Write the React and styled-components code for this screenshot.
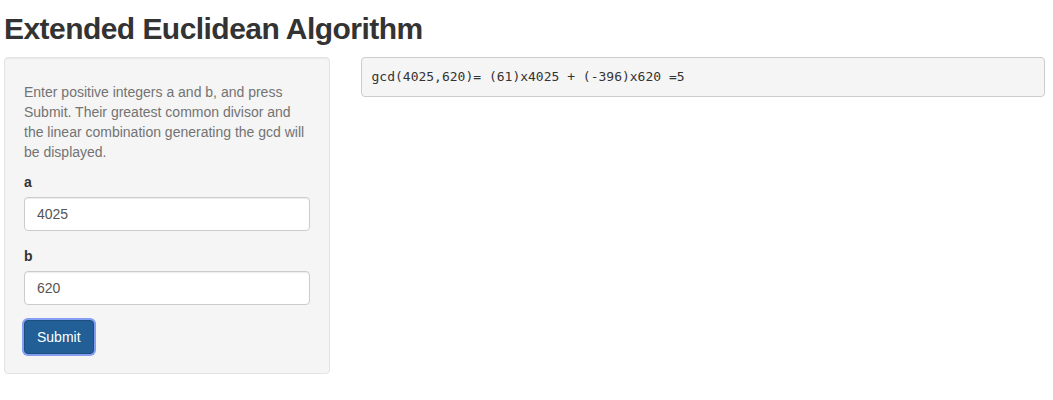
import React from "react";
import styled, { createGlobalStyle } from "styled-components";

const Global = createGlobalStyle`
  * { box-sizing: border-box; }
  html, body { margin: 0; padding: 0; background: #fff; }
  body {
    font-family: "Liberation Sans", Arial, Helvetica, sans-serif;
    font-size: 14px;
    line-height: 1.42857143;
    color: #333;
  }
`;

const Page = styled.div`
  padding: 0 8px 0 4px;
`;

const Title = styled.h2`
  margin: 12px 0 12px;
  font-size: 30px;
  font-weight: 700;
  line-height: 1.1;
  color: #333;
  letter-spacing: -0.55px;
`;

const Layout = styled.div`
  display: grid;
  grid-template-columns: 326px 1fr;
  column-gap: 31px;
  align-items: start;
`;

const Well = styled.form`
  background: #f5f5f5;
  border: 1px solid #e3e3e3;
  border-radius: 4px;
  padding: 19px;
  box-shadow: inset 0 1px 1px rgba(0, 0, 0, 0.05);
`;

const Help = styled.p`
  margin: 5px 0 10px;
  color: #737373;
`;

const FormGroup = styled.div`
  margin-bottom: 15px;
`;

const Label = styled.label`
  display: block;
  margin-bottom: 5px;
  font-weight: 700;
  color: #333;
`;

const Input = styled.input`
  display: block;
  width: 100%;
  height: 34px;
  padding: 6px 12px;
  font-family: inherit;
  font-size: 14px;
  color: #555;
  background: #fff;
  border: 1px solid #ccc;
  border-radius: 4px;
  box-shadow: inset 0 1px 1px rgba(0, 0, 0, 0.075);
  outline: none;
`;

const Button = styled.button`
  display: inline-block;
  height: 34px;
  padding: 6px 12px;
  font-family: inherit;
  font-size: 14px;
  line-height: 1.42857143;
  color: #fff;
  background: #215f96;
  border: 1px solid #1c4f7e;
  border-radius: 4px;
  box-shadow: 0 0 0 2px rgba(92, 128, 240, 0.75);
  cursor: pointer;
`;

const Output = styled.pre`
  margin: 0;
  padding: 9.5px;
  font-family: "DejaVu Sans Mono", Menlo, monospace;
  font-size: 13px;
  line-height: 18.57px;
  color: #333;
  background: #f5f5f5;
  border: 1px solid #ccc;
  border-radius: 4px;
  white-space: pre-wrap;
`;

export default function App() {
  return (
    <Page>
      <Global />
      <Title>Extended Euclidean Algorithm</Title>
      <Layout>
        <Well onSubmit={(e) => e.preventDefault()}>
          <Help>
            Enter positive integers a and b, and press Submit. Their greatest
            common divisor and the linear combination generating the gcd will
            be displayed.
          </Help>
          <FormGroup>
            <Label htmlFor="a">a</Label>
            <Input id="a" type="text" defaultValue="4025" />
          </FormGroup>
          <FormGroup>
            <Label htmlFor="b">b</Label>
            <Input id="b" type="text" defaultValue="620" />
          </FormGroup>
          <Button type="submit">Submit</Button>
        </Well>
        <Output>gcd(4025,620)= (61)x4025 + (-396)x620 =5</Output>
      </Layout>
    </Page>
  );
}
